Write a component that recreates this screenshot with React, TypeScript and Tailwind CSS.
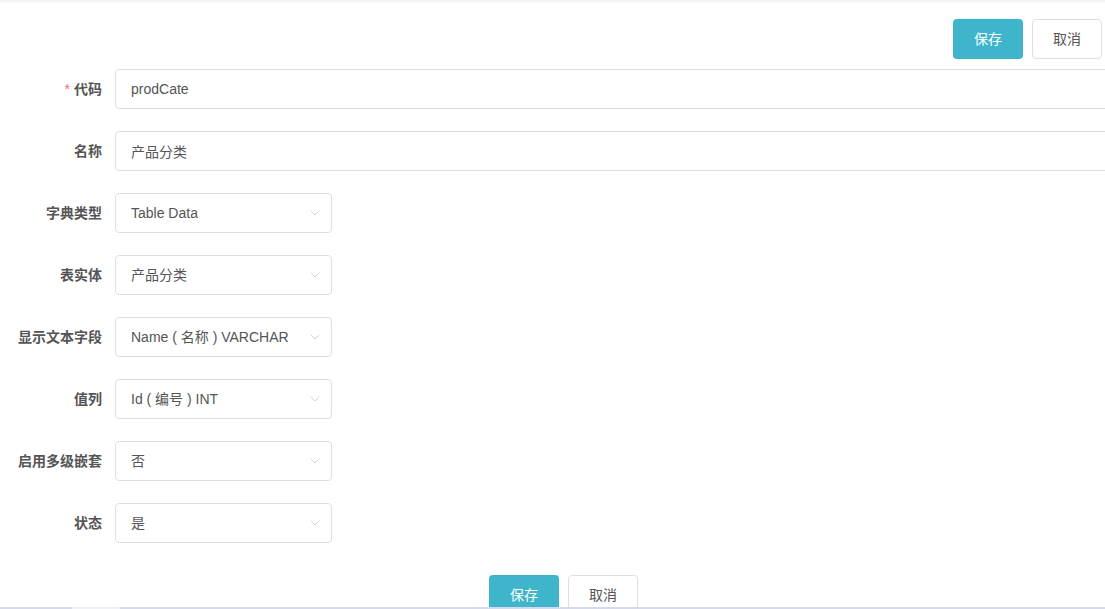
import React from "react";
import { ChevronDown } from "lucide-react";

const font = { fontFamily: '"Liberation Sans", "Noto Sans CJK SC", sans-serif' };

const Field: React.FC<{ label: string; required?: boolean; children: React.ReactNode }> = ({
  label,
  required,
  children,
}) => (
  <div className="flex items-center h-10">
    <label className="w-[103px] shrink-0 pr-[1px] text-right text-sm font-bold text-[#555]">
      {required && <span className="text-[#f56c6c] mr-1 font-normal">*</span>}
      {label}
    </label>
    <div className="ml-3">{children}</div>
  </div>
);

const TextInput: React.FC<{ value: string }> = ({ value }) => (
  <input
    readOnly
    value={value}
    className="h-10 w-[1010px] rounded border border-[#dcdfe6] px-[15px] text-sm text-[#555] outline-none"
  />
);

const Select: React.FC<{ value: string }> = ({ value }) => (
  <div className="flex h-10 w-[217px] items-center justify-between rounded border border-[#dcdfe6] pl-[15px] pr-[8px] text-sm text-[#555]">
    <span className="truncate">{value}</span>
    <ChevronDown size={16} strokeWidth={1.1} className="text-[#c0c4cc] shrink-0" />
  </div>
);

const Buttons: React.FC = () => (
  <div className="flex gap-[9px]">
    <button className="h-10 w-[70px] rounded bg-[#3fb5cb] text-sm text-white">保存</button>
    <button className="h-10 w-[70px] rounded border border-[#dcdfe6] bg-white text-sm text-[#555]">
      取消
    </button>
  </div>
);

export default function App() {
  return (
    <div className="relative h-[609px] w-[1105px] overflow-hidden bg-white" style={font}>
      <div className="h-1 bg-gradient-to-b from-[#f0f0f2] to-white" />
      <div className="flex justify-end pt-[15px] pr-[3px]">
        <Buttons />
      </div>
      <div className="mt-[10px] flex flex-col gap-[22px]">
        <Field label="代码" required>
          <TextInput value="prodCate" />
        </Field>
        <Field label="名称">
          <TextInput value="产品分类" />
        </Field>
        <Field label="字典类型">
          <Select value="Table Data" />
        </Field>
        <Field label="表实体">
          <Select value="产品分类" />
        </Field>
        <Field label="显示文本字段">
          <Select value="Name ( 名称 ) VARCHAR" />
        </Field>
        <Field label="值列">
          <Select value="Id ( 编号 ) INT" />
        </Field>
        <Field label="启用多级嵌套">
          <Select value="否" />
        </Field>
        <Field label="状态">
          <Select value="是" />
        </Field>
      </div>
      <div className="mt-8 pl-[489px]">
        <Buttons />
      </div>
      <div className="absolute bottom-0 left-0 flex h-[2px] w-full bg-[#d5d9ec]">
        <div className="ml-[72px] w-12 bg-[#eef0f8]" />
      </div>
    </div>
  );
}
